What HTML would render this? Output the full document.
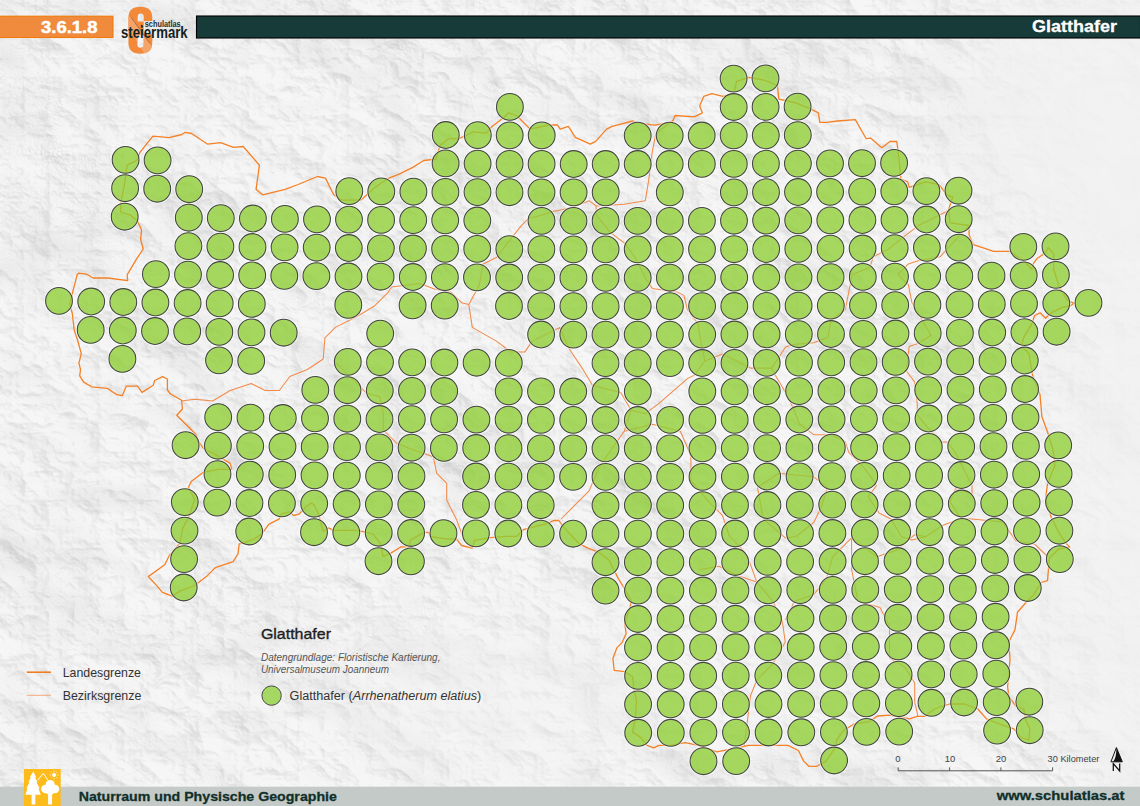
<!DOCTYPE html>
<html><head><meta charset="utf-8"><style>
html,body{margin:0;padding:0;}
body{width:1140px;height:806px;overflow:hidden;position:relative;background:#efefef;}
svg{position:absolute;left:0;top:0;}
text{font-family:"Liberation Sans",sans-serif;}
</style></head><body>
<svg width="1140" height="806" viewBox="0 0 1140 806">
<defs>
<filter id="hs" x="0" y="0" width="100%" height="100%" color-interpolation-filters="sRGB">
<feTurbulence type="turbulence" baseFrequency="0.02 0.026" numOctaves="4" seed="3" result="n"/>
<feColorMatrix in="n" type="matrix" values="0 0 0 0 0  0 0 0 0 0  0 0 0 0 0  -1.2 0 0 0 1" result="a"/>
<feDiffuseLighting in="a" surfaceScale="6" diffuseConstant="1.15" lighting-color="#ffffff" result="l1">
<feDistantLight azimuth="315" elevation="55"/>
</feDiffuseLighting>
<feTurbulence type="fractalNoise" baseFrequency="0.007 0.009" numOctaves="3" seed="11" result="n2"/>
<feColorMatrix in="n2" type="matrix" values="0 0 0 0 0  0 0 0 0 0  0 0 0 0 0  1 0 0 0 0" result="a2"/>
<feDiffuseLighting in="a2" surfaceScale="30" diffuseConstant="1.15" lighting-color="#ffffff" result="l2">
<feDistantLight azimuth="315" elevation="50"/>
</feDiffuseLighting>
<feComposite in="l1" in2="l2" operator="arithmetic" k1="0" k2="0.6" k3="0.4" k4="0" result="l"/>
<feComponentTransfer in="l">
<feFuncR type="linear" slope="0.19" intercept="0.776"/>
<feFuncG type="linear" slope="0.19" intercept="0.776"/>
<feFuncB type="linear" slope="0.19" intercept="0.776"/>
</feComponentTransfer>
</filter>
<filter id="bl" x="-50%" y="-50%" width="200%" height="200%"><feGaussianBlur stdDeviation="45"/></filter>
<mask id="m" maskUnits="userSpaceOnUse" x="0" y="0" width="1140" height="806">
<rect width="1140" height="806" fill="#fff"/>
<g filter="url(#bl)">
<ellipse cx="1110" cy="110" rx="170" ry="150" fill="#000" fill-opacity="0.85"/>
<ellipse cx="1135" cy="480" rx="90" ry="380" fill="#000" fill-opacity="0.85"/>
<ellipse cx="500" cy="700" rx="170" ry="90" fill="#000" fill-opacity="0.5"/>
<ellipse cx="850" cy="630" rx="200" ry="130" fill="#000" fill-opacity="0.35"/>
</g>
</mask>
</defs>
<rect width="1140" height="806" fill="#f2f2f2"/>
<rect width="1140" height="806" filter="url(#hs)" mask="url(#m)"/>
<path d="M181.0 401.0 L195.0 399.3 L212.6 401.0 L230.2 390.5 L251.2 383.5 L265.3 390.5 L279.3 390.5 L289.8 376.5 L307.4 369.5 L323.2 359.0 L324.9 337.9 L335.4 327.4 L356.5 316.8 L374.0 306.3 L388.1 292.3 L391.6 287.0 L405.6 285.3 L419.6 283.5 L433.7 288.8 L451.2 292.3 L461.8 302.8 L468.8 304.6 L472.3 327.4 L496.8 341.4 L510.9 351.9 L524.9 351.9 L532.0 341.4 L546.0 334.4 L560.0 327.4 L568.0 347.0 L582.1 368.1 L592.6 385.6 L620.7 392.6 L631.2 410.2 L645.3 413.7 L659.3 403.2 L687.4 378.6 L694.4 375.1 L704.9 361.0 L722.5 354.0 L750.5 368.1 L771.6 368.1 L785.6 347.0 L792.6 344.6 L813.7 342.8 L827.7 337.5 L831.2 320.0 L845.3 309.5 L848.8 291.9 L852.3 274.4 L869.8 267.4 L873.3 256.8 L887.4 249.8 L904.9 235.8 L918.9 225.3 L940.0 214.7 L952.0 209.0 M468.8 304.6 L479.3 285.3 L482.8 264.2 L496.8 257.2 L507.4 243.2 L521.4 225.6 L528.4 218.6 L542.5 215.1 L554.0 211.2 L571.6 207.7 L589.1 200.7 L596.1 206.0 L624.2 204.2 L645.3 200.7 L648.8 179.6 L652.3 151.6 L655.8 134.0 L673.3 120.0 M596.1 206.0 L596.1 214.7 L610.2 232.3 L624.2 242.8 L634.7 256.8 L645.3 277.9 L652.3 288.4 L676.8 291.9 L683.9 295.4 L687.4 309.5 L697.9 323.5 L701.4 344.6 L704.9 361.0 M969.0 225.5 L940.0 256.8 L918.9 260.4 L908.4 263.9 L897.9 274.4 L908.4 284.9 L911.9 302.5 L920.1 316.4 L931.0 335.5 L917.3 343.7 L909.2 346.4 L906.4 371.0 L914.6 381.9 L917.3 403.8 L917.3 414.7 L928.3 428.3 L941.9 442.0 L947.4 442.0 L955.6 452.9 L961.0 463.8 L972.0 485.7 L972.0 493.9 L955.6 488.4 L950.1 502.1 L961.0 518.5 L971.6 518.9 L1003.1 522.1 L1015.8 541.0 L1034.7 544.2 L1047.0 556.0 M771.6 368.1 L775.1 375.1 L785.6 392.6 L792.6 406.7 L799.6 424.2 L813.7 434.7 L831.2 434.7 L845.3 441.8 L848.8 452.3 L862.8 466.3 L873.3 480.4 L876.4 485.7 L868.2 496.6 L879.1 513.0 L890.9 519.0 L901.4 536.5 L911.9 540.0 L926.0 536.5 L943.1 525.3 L961.0 518.5 M631.2 410.2 L624.2 431.2 L652.3 424.2 L680.4 431.2 L690.9 455.8 L690.9 480.4 L708.4 501.4 L722.5 515.4 L729.5 536.5 L743.5 550.5 L750.5 564.6 L756.8 582.1 L772.6 601.0 L782.1 620.0 L785.3 642.1 L772.6 664.2 L756.8 680.0 L750.5 695.8 L747.4 721.0 L744.2 746.0 M624.2 431.2 L599.6 466.3 L589.1 490.9 L575.1 504.9 L561.1 519.0 M757.5 487.4 L778.6 473.3 L813.7 476.8 L827.7 487.4 L820.7 508.4 L813.7 522.5 L796.1 536.5 L785.3 537.9 L763.2 518.9 L757.5 487.4 M785.3 620.0 L794.7 601.0 L813.7 594.7 L826.3 578.9 L832.6 556.8 L851.6 537.9 L876.8 556.8 L895.8 550.5 L914.7 534.7 L926.0 536.5 M851.6 537.9 L851.6 569.5 L857.9 601.0 L880.0 607.4 L889.5 626.3 L889.5 657.9 L905.2 667.4 L914.7 683.1 L914.7 702.1 L917.9 716.0 M700.0 569.5 L718.9 566.3 L737.9 575.8 L756.8 582.1 M333.3 360.0 L353.3 380.0 L366.7 393.3 L380.0 396.7 L383.3 413.3 L383.3 430.0 L396.7 443.3 L413.3 450.0 L433.3 456.7 L436.7 473.3 L446.7 483.3 L446.7 500.0 L456.7 520.0 L463.3 538.0" fill="none" stroke="#f28a48" stroke-width="1.05" stroke-linejoin="round"/>
<path d="M148.3 576.6 L164.7 564.7 L169.2 555.8 L179.6 543.8 L182.6 528.9 L190.0 514.0 L194.5 499.2 L188.5 487.2 L191.5 481.3 L203.4 472.3 L218.3 469.4 L231.7 469.4 L230.2 463.4 L215.3 454.5 L203.4 448.5 L199.0 442.1 L195.8 434.2 L186.3 424.7 L176.8 415.3 L182.4 409.0 L181.6 400.3 L170.5 394.0 L167.4 390.0 L167.4 379.0 L162.6 376.6 L154.7 380.5 L153.2 385.3 L142.1 392.4 L137.4 386.1 L126.3 386.1 L122.4 395.5 L116.8 394.7 L107.4 388.4 L91.6 386.8 L83.7 382.1 L79.7 375.8 L80.5 369.5 L78.9 363.2 L81.3 353.7 L77.4 339.5 L74.2 330.0 L72.3 313.5 L69.7 303.9 L77.1 274.8 L78.7 273.2 L86.8 274.2 L93.2 278.0 L107.7 278.0 L127.7 280.6 L127.1 274.8 L136.8 258.7 L143.2 249.0 L140.6 239.4 L141.6 229.7 L136.8 220.0 L130.3 215.2 L120.6 212.0 L120.6 203.9 L124.5 184.5 L127.1 165.2 L136.8 160.3 L140.0 152.3 L146.5 144.2 L152.9 136.1 L169.0 137.7 L181.9 134.5 L185.2 132.3 L191.6 133.5 L207.7 144.2 L220.6 142.6 L233.5 147.4 L243.2 146.5 L259.4 165.2 L256.1 189.4 L262.6 194.8 L285.2 189.4 L298.1 184.5 L317.4 176.5 L325.5 178.1 L333.7 194.7 L341.8 200.1 L361.0 200.1 L374.6 187.8 L388.3 178.3 L399.2 174.2 L412.8 167.4 L423.7 160.5 L436.0 159.2 L440.1 145.5 L448.3 138.7 L459.2 138.7 L472.9 131.9 L486.5 133.2 L492.0 126.4 L502.9 118.2 L508.4 112.8 L516.6 115.5 L522.0 121.0 L530.2 129.1 L549.3 125.0 L557.5 125.0 L560.2 129.1 L568.4 126.4 L575.3 137.3 L590.3 144.2 L595.7 141.4 L606.6 129.1 L612.1 126.4 L632.8 121.0 L638.2 123.2 L654.6 125.1 L672.3 122.3 L675.1 115.5 L694.2 116.9 L702.4 112.8 L699.6 106.0 L703.7 96.4 L711.9 93.7 L722.8 96.4 L733.8 93.7 L736.5 81.4 L748.8 77.3 L763.8 80.0 L777.5 85.5 L778.8 99.1 L785.6 100.5 L796.6 103.2 L812.9 110.1 L818.4 112.8 L819.8 122.3 L826.6 122.3 L837.5 121.0 L855.3 119.6 L866.2 138.7 L870.9 138.2 L881.8 147.7 L890.0 141.5 L896.8 141.5 L898.2 151.8 L900.9 179.1 L907.7 181.8 L909.1 187.3 L925.5 181.8 L939.1 184.6 L947.3 195.5 L952.8 196.8 L948.7 209.1 L950.0 222.8 L969.1 225.5 L969.1 235.0 L973.2 244.6 L985.5 248.7 L993.7 251.4 L1010.0 251.4 L1023.7 261.0 L1031.9 269.2 L1033.3 263.7 L1037.4 258.2 L1045.5 252.8 L1048.3 247.3 L1053.7 254.2 L1053.7 269.2 L1059.2 286.9 L1067.4 300.5 L1074.2 303.3 L1070.1 306.0 L1061.9 307.4 L1051.0 312.8 L1045.5 318.3 L1040.1 312.8 L1034.6 315.5 L1031.9 323.7 L1023.7 337.4 L1021.4 346.0 L1028.9 353.5 L1032.6 375.8 L1040.0 394.5 L1041.9 416.8 L1047.5 431.7 L1053.1 450.3 L1055.0 465.2 L1047.5 483.8 L1045.6 498.7 L1051.2 517.3 L1058.7 532.2 L1066.1 543.4 L1069.8 547.1 L1058.7 549.0 L1049.4 558.3 L1047.5 580.6 L1041.0 582.5 L1033.6 594.9 L1026.2 602.3 L1017.5 612.2 L1015.0 629.6 L1008.8 642.0 L1010.0 659.4 L1007.6 686.6 L1008.8 696.6 L1016.3 706.5 L1023.7 709.0 L1026.2 721.4 L1029.9 728.8 L1028.7 740.0 L1021.2 737.5 L1013.8 728.8 L998.9 723.8 L986.5 718.9 L977.8 709.0 L964.2 704.0 L949.3 704.0 L934.4 709.0 L924.5 716.4 L917.0 716.4 L909.6 718.9 L889.8 715.2 L877.4 716.0 L869.5 721.6 L853.7 724.2 L843.2 730.8 L836.6 740.0 L835.3 747.9 L826.0 761.1 L816.8 766.3 L808.9 766.3 L803.7 761.1 L798.4 750.5 L787.9 745.3 L774.7 745.3 L764.2 745.3 L748.4 745.3 L737.9 747.9 L716.8 751.8 L698.4 745.3 L685.3 742.6 L669.5 745.3 L658.9 745.3 L653.7 747.9 L647.1 745.3 L640.5 737.4 L632.6 732.1 L635.3 718.9 L636.6 700.5 L634.0 690.0 L632.6 676.8 L624.7 671.6 L614.2 670.3 L612.9 658.4 L616.8 647.9 L622.1 642.6 L626.1 633.7 L624.7 623.2 L630.0 607.4 L631.3 600.8 L624.7 589.0 L618.2 578.4 L614.2 570.5 L608.9 560.0 L598.4 552.1 L587.9 548.2 L580.0 544.2 L569.5 533.7 L561.6 524.5 L558.9 520.5 L553.7 520.5 L548.4 523.2 L537.9 525.8 L523.4 529.7 L516.8 536.3 L506.3 536.3 L490.5 537.6 L474.7 540.3 L472.1 548.2 L461.6 545.5 L456.3 538.9 L445.8 538.9 L430.0 536.3 L428.7 532.4 L424.7 532.4 L416.8 536.3 L410.3 540.3 L408.9 546.8 L401.1 546.8 L390.5 553.4 L383.1 556.4 L380.7 544.0 L373.2 534.1 L363.3 531.6 L355.9 530.4 L333.5 530.4 L328.6 527.9 L323.6 531.6 L321.1 524.2 L318.7 514.2 L313.7 504.3 L311.2 503.1 L306.2 506.8 L298.8 514.2 L293.8 515.5 L288.9 511.8 L281.4 514.2 L279.0 519.2 L269.0 524.2 L261.6 534.1 L254.2 539.0 L245.1 542.3 L239.2 543.8 L238.0 553.9 L233.2 561.7 L215.3 567.7 L212.3 570.6 L206.4 576.6 L194.5 585.5 L179.8 591.1 L172.3 596.1 L162.4 592.4 L155.0 583.7 Z" fill="none" stroke="#f58025" stroke-width="1.3" stroke-linejoin="round"/>
<g fill="none" stroke="#fff" stroke-opacity="0.55" stroke-width="3">
<circle cx="733.6" cy="78.6" r="13.4"/>
<circle cx="765.5" cy="78.4" r="13.4"/>
<circle cx="509.9" cy="106.9" r="13.4"/>
<circle cx="733.7" cy="107.0" r="13.4"/>
<circle cx="765.6" cy="106.9" r="13.4"/>
<circle cx="797.6" cy="106.7" r="13.4"/>
<circle cx="445.8" cy="135.0" r="13.4"/>
<circle cx="477.8" cy="135.2" r="13.4"/>
<circle cx="509.7" cy="135.3" r="13.4"/>
<circle cx="541.7" cy="135.4" r="13.4"/>
<circle cx="637.7" cy="135.6" r="13.4"/>
<circle cx="669.7" cy="135.6" r="13.4"/>
<circle cx="701.7" cy="135.5" r="13.4"/>
<circle cx="733.7" cy="135.4" r="13.4"/>
<circle cx="765.8" cy="135.3" r="13.4"/>
<circle cx="797.8" cy="135.1" r="13.4"/>
<circle cx="125.6" cy="159.8" r="13.4"/>
<circle cx="157.6" cy="160.3" r="13.4"/>
<circle cx="445.6" cy="163.4" r="13.4"/>
<circle cx="477.6" cy="163.6" r="13.4"/>
<circle cx="509.6" cy="163.8" r="13.4"/>
<circle cx="541.6" cy="163.9" r="13.4"/>
<circle cx="573.7" cy="164.0" r="13.4"/>
<circle cx="605.7" cy="164.0" r="13.4"/>
<circle cx="637.7" cy="164.0" r="13.4"/>
<circle cx="669.7" cy="164.0" r="13.4"/>
<circle cx="701.8" cy="163.9" r="13.4"/>
<circle cx="733.8" cy="163.9" r="13.4"/>
<circle cx="765.9" cy="163.7" r="13.4"/>
<circle cx="797.9" cy="163.6" r="13.4"/>
<circle cx="830.0" cy="163.4" r="13.4"/>
<circle cx="862.0" cy="163.2" r="13.4"/>
<circle cx="894.1" cy="162.9" r="13.4"/>
<circle cx="125.1" cy="188.2" r="13.4"/>
<circle cx="157.2" cy="188.7" r="13.4"/>
<circle cx="189.2" cy="189.2" r="13.4"/>
<circle cx="349.3" cy="191.1" r="13.4"/>
<circle cx="381.3" cy="191.4" r="13.4"/>
<circle cx="413.4" cy="191.7" r="13.4"/>
<circle cx="445.4" cy="191.9" r="13.4"/>
<circle cx="477.5" cy="192.1" r="13.4"/>
<circle cx="509.5" cy="192.2" r="13.4"/>
<circle cx="541.5" cy="192.3" r="13.4"/>
<circle cx="573.6" cy="192.4" r="13.4"/>
<circle cx="605.7" cy="192.4" r="13.4"/>
<circle cx="669.8" cy="192.4" r="13.4"/>
<circle cx="733.9" cy="192.3" r="13.4"/>
<circle cx="766.0" cy="192.2" r="13.4"/>
<circle cx="798.0" cy="192.0" r="13.4"/>
<circle cx="830.1" cy="191.8" r="13.4"/>
<circle cx="862.2" cy="191.6" r="13.4"/>
<circle cx="894.3" cy="191.3" r="13.4"/>
<circle cx="926.4" cy="191.1" r="13.4"/>
<circle cx="958.5" cy="190.7" r="13.4"/>
<circle cx="124.7" cy="216.7" r="13.4"/>
<circle cx="188.8" cy="217.7" r="13.4"/>
<circle cx="220.8" cy="218.1" r="13.4"/>
<circle cx="252.9" cy="218.5" r="13.4"/>
<circle cx="284.9" cy="218.9" r="13.4"/>
<circle cx="317.0" cy="219.3" r="13.4"/>
<circle cx="349.0" cy="219.6" r="13.4"/>
<circle cx="381.1" cy="219.9" r="13.4"/>
<circle cx="413.2" cy="220.1" r="13.4"/>
<circle cx="445.2" cy="220.3" r="13.4"/>
<circle cx="477.3" cy="220.5" r="13.4"/>
<circle cx="541.5" cy="220.8" r="13.4"/>
<circle cx="573.5" cy="220.8" r="13.4"/>
<circle cx="605.6" cy="220.9" r="13.4"/>
<circle cx="637.7" cy="220.9" r="13.4"/>
<circle cx="669.8" cy="220.9" r="13.4"/>
<circle cx="701.9" cy="220.8" r="13.4"/>
<circle cx="734.0" cy="220.7" r="13.4"/>
<circle cx="766.1" cy="220.6" r="13.4"/>
<circle cx="798.2" cy="220.4" r="13.4"/>
<circle cx="830.3" cy="220.3" r="13.4"/>
<circle cx="862.4" cy="220.0" r="13.4"/>
<circle cx="894.5" cy="219.8" r="13.4"/>
<circle cx="926.6" cy="219.5" r="13.4"/>
<circle cx="958.7" cy="219.2" r="13.4"/>
<circle cx="188.4" cy="246.1" r="13.4"/>
<circle cx="220.4" cy="246.6" r="13.4"/>
<circle cx="252.5" cy="247.0" r="13.4"/>
<circle cx="284.6" cy="247.4" r="13.4"/>
<circle cx="316.7" cy="247.7" r="13.4"/>
<circle cx="348.8" cy="248.0" r="13.4"/>
<circle cx="380.9" cy="248.3" r="13.4"/>
<circle cx="413.0" cy="248.5" r="13.4"/>
<circle cx="445.1" cy="248.8" r="13.4"/>
<circle cx="477.2" cy="248.9" r="13.4"/>
<circle cx="509.3" cy="249.1" r="13.4"/>
<circle cx="541.4" cy="249.2" r="13.4"/>
<circle cx="573.5" cy="249.3" r="13.4"/>
<circle cx="605.6" cy="249.3" r="13.4"/>
<circle cx="637.7" cy="249.3" r="13.4"/>
<circle cx="669.8" cy="249.3" r="13.4"/>
<circle cx="702.0" cy="249.3" r="13.4"/>
<circle cx="734.1" cy="249.2" r="13.4"/>
<circle cx="766.2" cy="249.0" r="13.4"/>
<circle cx="798.3" cy="248.9" r="13.4"/>
<circle cx="830.5" cy="248.7" r="13.4"/>
<circle cx="862.6" cy="248.5" r="13.4"/>
<circle cx="894.7" cy="248.2" r="13.4"/>
<circle cx="926.9" cy="247.9" r="13.4"/>
<circle cx="959.0" cy="247.6" r="13.4"/>
<circle cx="1023.3" cy="246.8" r="13.4"/>
<circle cx="1055.5" cy="246.4" r="13.4"/>
<circle cx="155.9" cy="274.1" r="13.4"/>
<circle cx="188.0" cy="274.6" r="13.4"/>
<circle cx="220.1" cy="275.0" r="13.4"/>
<circle cx="252.2" cy="275.4" r="13.4"/>
<circle cx="284.3" cy="275.8" r="13.4"/>
<circle cx="316.4" cy="276.1" r="13.4"/>
<circle cx="348.5" cy="276.5" r="13.4"/>
<circle cx="380.6" cy="276.7" r="13.4"/>
<circle cx="412.8" cy="277.0" r="13.4"/>
<circle cx="444.9" cy="277.2" r="13.4"/>
<circle cx="477.0" cy="277.4" r="13.4"/>
<circle cx="509.2" cy="277.5" r="13.4"/>
<circle cx="541.3" cy="277.6" r="13.4"/>
<circle cx="573.4" cy="277.7" r="13.4"/>
<circle cx="605.6" cy="277.8" r="13.4"/>
<circle cx="637.7" cy="277.8" r="13.4"/>
<circle cx="669.9" cy="277.7" r="13.4"/>
<circle cx="702.0" cy="277.7" r="13.4"/>
<circle cx="734.2" cy="277.6" r="13.4"/>
<circle cx="766.3" cy="277.5" r="13.4"/>
<circle cx="798.5" cy="277.3" r="13.4"/>
<circle cx="830.6" cy="277.1" r="13.4"/>
<circle cx="862.8" cy="276.9" r="13.4"/>
<circle cx="895.0" cy="276.6" r="13.4"/>
<circle cx="927.2" cy="276.3" r="13.4"/>
<circle cx="959.3" cy="276.0" r="13.4"/>
<circle cx="991.5" cy="275.7" r="13.4"/>
<circle cx="1023.7" cy="275.3" r="13.4"/>
<circle cx="1055.9" cy="274.8" r="13.4"/>
<circle cx="59.0" cy="300.9" r="13.4"/>
<circle cx="91.2" cy="301.5" r="13.4"/>
<circle cx="123.3" cy="302.0" r="13.4"/>
<circle cx="155.4" cy="302.5" r="13.4"/>
<circle cx="187.6" cy="303.0" r="13.4"/>
<circle cx="219.7" cy="303.4" r="13.4"/>
<circle cx="251.8" cy="303.9" r="13.4"/>
<circle cx="348.3" cy="304.9" r="13.4"/>
<circle cx="412.6" cy="305.4" r="13.4"/>
<circle cx="444.7" cy="305.6" r="13.4"/>
<circle cx="509.0" cy="306.0" r="13.4"/>
<circle cx="541.2" cy="306.1" r="13.4"/>
<circle cx="573.4" cy="306.2" r="13.4"/>
<circle cx="605.6" cy="306.2" r="13.4"/>
<circle cx="637.7" cy="306.2" r="13.4"/>
<circle cx="669.9" cy="306.2" r="13.4"/>
<circle cx="702.1" cy="306.1" r="13.4"/>
<circle cx="734.3" cy="306.0" r="13.4"/>
<circle cx="766.5" cy="305.9" r="13.4"/>
<circle cx="798.6" cy="305.7" r="13.4"/>
<circle cx="830.8" cy="305.6" r="13.4"/>
<circle cx="863.0" cy="305.3" r="13.4"/>
<circle cx="895.2" cy="305.1" r="13.4"/>
<circle cx="927.4" cy="304.8" r="13.4"/>
<circle cx="959.6" cy="304.4" r="13.4"/>
<circle cx="991.8" cy="304.1" r="13.4"/>
<circle cx="1024.0" cy="303.7" r="13.4"/>
<circle cx="1056.3" cy="303.3" r="13.4"/>
<circle cx="1088.5" cy="302.8" r="13.4"/>
<circle cx="90.7" cy="329.9" r="13.4"/>
<circle cx="122.8" cy="330.5" r="13.4"/>
<circle cx="155.0" cy="331.0" r="13.4"/>
<circle cx="187.2" cy="331.4" r="13.4"/>
<circle cx="219.3" cy="331.9" r="13.4"/>
<circle cx="251.5" cy="332.3" r="13.4"/>
<circle cx="283.7" cy="332.7" r="13.4"/>
<circle cx="380.2" cy="333.6" r="13.4"/>
<circle cx="541.1" cy="334.5" r="13.4"/>
<circle cx="573.3" cy="334.6" r="13.4"/>
<circle cx="605.5" cy="334.6" r="13.4"/>
<circle cx="637.7" cy="334.6" r="13.4"/>
<circle cx="669.9" cy="334.6" r="13.4"/>
<circle cx="702.2" cy="334.6" r="13.4"/>
<circle cx="734.4" cy="334.5" r="13.4"/>
<circle cx="766.6" cy="334.3" r="13.4"/>
<circle cx="798.8" cy="334.2" r="13.4"/>
<circle cx="831.0" cy="334.0" r="13.4"/>
<circle cx="863.2" cy="333.8" r="13.4"/>
<circle cx="895.5" cy="333.5" r="13.4"/>
<circle cx="927.7" cy="333.2" r="13.4"/>
<circle cx="959.9" cy="332.9" r="13.4"/>
<circle cx="992.2" cy="332.5" r="13.4"/>
<circle cx="1024.4" cy="332.1" r="13.4"/>
<circle cx="1056.6" cy="331.7" r="13.4"/>
<circle cx="122.4" cy="358.9" r="13.4"/>
<circle cx="219.0" cy="360.3" r="13.4"/>
<circle cx="251.2" cy="360.8" r="13.4"/>
<circle cx="347.8" cy="361.8" r="13.4"/>
<circle cx="380.0" cy="362.1" r="13.4"/>
<circle cx="412.2" cy="362.3" r="13.4"/>
<circle cx="444.4" cy="362.5" r="13.4"/>
<circle cx="476.6" cy="362.7" r="13.4"/>
<circle cx="508.8" cy="362.8" r="13.4"/>
<circle cx="605.5" cy="363.1" r="13.4"/>
<circle cx="637.7" cy="363.1" r="13.4"/>
<circle cx="670.0" cy="363.1" r="13.4"/>
<circle cx="702.2" cy="363.0" r="13.4"/>
<circle cx="734.5" cy="362.9" r="13.4"/>
<circle cx="766.7" cy="362.8" r="13.4"/>
<circle cx="799.0" cy="362.6" r="13.4"/>
<circle cx="831.2" cy="362.4" r="13.4"/>
<circle cx="863.5" cy="362.2" r="13.4"/>
<circle cx="895.7" cy="361.9" r="13.4"/>
<circle cx="928.0" cy="361.6" r="13.4"/>
<circle cx="960.2" cy="361.3" r="13.4"/>
<circle cx="992.5" cy="360.9" r="13.4"/>
<circle cx="1024.8" cy="360.5" r="13.4"/>
<circle cx="315.3" cy="389.9" r="13.4"/>
<circle cx="347.5" cy="390.2" r="13.4"/>
<circle cx="379.8" cy="390.5" r="13.4"/>
<circle cx="412.0" cy="390.8" r="13.4"/>
<circle cx="444.2" cy="391.0" r="13.4"/>
<circle cx="508.7" cy="391.3" r="13.4"/>
<circle cx="541.0" cy="391.4" r="13.4"/>
<circle cx="573.2" cy="391.5" r="13.4"/>
<circle cx="605.5" cy="391.5" r="13.4"/>
<circle cx="637.8" cy="391.5" r="13.4"/>
<circle cx="702.3" cy="391.4" r="13.4"/>
<circle cx="734.6" cy="391.3" r="13.4"/>
<circle cx="766.8" cy="391.2" r="13.4"/>
<circle cx="799.1" cy="391.1" r="13.4"/>
<circle cx="831.4" cy="390.9" r="13.4"/>
<circle cx="863.7" cy="390.6" r="13.4"/>
<circle cx="896.0" cy="390.4" r="13.4"/>
<circle cx="928.2" cy="390.1" r="13.4"/>
<circle cx="960.5" cy="389.7" r="13.4"/>
<circle cx="992.8" cy="389.4" r="13.4"/>
<circle cx="1025.1" cy="389.0" r="13.4"/>
<circle cx="218.2" cy="417.2" r="13.4"/>
<circle cx="250.5" cy="417.7" r="13.4"/>
<circle cx="282.8" cy="418.0" r="13.4"/>
<circle cx="315.0" cy="418.4" r="13.4"/>
<circle cx="347.3" cy="418.7" r="13.4"/>
<circle cx="379.5" cy="419.0" r="13.4"/>
<circle cx="411.8" cy="419.2" r="13.4"/>
<circle cx="444.1" cy="419.4" r="13.4"/>
<circle cx="476.4" cy="419.6" r="13.4"/>
<circle cx="508.6" cy="419.7" r="13.4"/>
<circle cx="540.9" cy="419.8" r="13.4"/>
<circle cx="573.2" cy="419.9" r="13.4"/>
<circle cx="605.5" cy="420.0" r="13.4"/>
<circle cx="637.8" cy="420.0" r="13.4"/>
<circle cx="670.1" cy="419.9" r="13.4"/>
<circle cx="702.4" cy="419.9" r="13.4"/>
<circle cx="734.7" cy="419.8" r="13.4"/>
<circle cx="767.0" cy="419.7" r="13.4"/>
<circle cx="799.3" cy="419.5" r="13.4"/>
<circle cx="831.6" cy="419.3" r="13.4"/>
<circle cx="863.9" cy="419.1" r="13.4"/>
<circle cx="896.2" cy="418.8" r="13.4"/>
<circle cx="928.5" cy="418.5" r="13.4"/>
<circle cx="960.8" cy="418.2" r="13.4"/>
<circle cx="993.2" cy="417.8" r="13.4"/>
<circle cx="1025.5" cy="417.4" r="13.4"/>
<circle cx="185.6" cy="445.2" r="13.4"/>
<circle cx="217.9" cy="445.7" r="13.4"/>
<circle cx="250.2" cy="446.1" r="13.4"/>
<circle cx="282.5" cy="446.5" r="13.4"/>
<circle cx="314.7" cy="446.8" r="13.4"/>
<circle cx="347.0" cy="447.1" r="13.4"/>
<circle cx="379.3" cy="447.4" r="13.4"/>
<circle cx="411.6" cy="447.7" r="13.4"/>
<circle cx="443.9" cy="447.9" r="13.4"/>
<circle cx="476.2" cy="448.0" r="13.4"/>
<circle cx="508.5" cy="448.2" r="13.4"/>
<circle cx="540.9" cy="448.3" r="13.4"/>
<circle cx="573.2" cy="448.4" r="13.4"/>
<circle cx="605.5" cy="448.4" r="13.4"/>
<circle cx="637.8" cy="448.4" r="13.4"/>
<circle cx="670.1" cy="448.4" r="13.4"/>
<circle cx="702.5" cy="448.3" r="13.4"/>
<circle cx="734.8" cy="448.2" r="13.4"/>
<circle cx="767.1" cy="448.1" r="13.4"/>
<circle cx="799.4" cy="447.9" r="13.4"/>
<circle cx="831.8" cy="447.7" r="13.4"/>
<circle cx="864.1" cy="447.5" r="13.4"/>
<circle cx="896.5" cy="447.2" r="13.4"/>
<circle cx="928.8" cy="446.9" r="13.4"/>
<circle cx="961.2" cy="446.6" r="13.4"/>
<circle cx="993.5" cy="446.2" r="13.4"/>
<circle cx="1025.9" cy="445.8" r="13.4"/>
<circle cx="1058.2" cy="445.4" r="13.4"/>
<circle cx="217.5" cy="474.1" r="13.4"/>
<circle cx="249.8" cy="474.6" r="13.4"/>
<circle cx="282.2" cy="474.9" r="13.4"/>
<circle cx="314.5" cy="475.3" r="13.4"/>
<circle cx="346.8" cy="475.6" r="13.4"/>
<circle cx="379.1" cy="475.9" r="13.4"/>
<circle cx="411.5" cy="476.1" r="13.4"/>
<circle cx="476.1" cy="476.5" r="13.4"/>
<circle cx="508.5" cy="476.6" r="13.4"/>
<circle cx="540.8" cy="476.7" r="13.4"/>
<circle cx="573.1" cy="476.8" r="13.4"/>
<circle cx="605.5" cy="476.8" r="13.4"/>
<circle cx="637.8" cy="476.8" r="13.4"/>
<circle cx="670.2" cy="476.8" r="13.4"/>
<circle cx="702.5" cy="476.8" r="13.4"/>
<circle cx="734.9" cy="476.7" r="13.4"/>
<circle cx="767.2" cy="476.5" r="13.4"/>
<circle cx="799.6" cy="476.4" r="13.4"/>
<circle cx="832.0" cy="476.2" r="13.4"/>
<circle cx="864.3" cy="475.9" r="13.4"/>
<circle cx="896.7" cy="475.7" r="13.4"/>
<circle cx="929.1" cy="475.4" r="13.4"/>
<circle cx="961.5" cy="475.0" r="13.4"/>
<circle cx="993.9" cy="474.7" r="13.4"/>
<circle cx="1026.2" cy="474.3" r="13.4"/>
<circle cx="1058.6" cy="473.8" r="13.4"/>
<circle cx="184.8" cy="502.1" r="13.4"/>
<circle cx="217.2" cy="502.6" r="13.4"/>
<circle cx="249.5" cy="503.0" r="13.4"/>
<circle cx="281.9" cy="503.4" r="13.4"/>
<circle cx="314.2" cy="503.7" r="13.4"/>
<circle cx="346.6" cy="504.0" r="13.4"/>
<circle cx="378.9" cy="504.3" r="13.4"/>
<circle cx="411.3" cy="504.5" r="13.4"/>
<circle cx="476.0" cy="504.9" r="13.4"/>
<circle cx="508.4" cy="505.1" r="13.4"/>
<circle cx="540.7" cy="505.2" r="13.4"/>
<circle cx="605.5" cy="505.3" r="13.4"/>
<circle cx="637.9" cy="505.3" r="13.4"/>
<circle cx="670.2" cy="505.3" r="13.4"/>
<circle cx="702.6" cy="505.2" r="13.4"/>
<circle cx="735.0" cy="505.1" r="13.4"/>
<circle cx="767.4" cy="505.0" r="13.4"/>
<circle cx="799.8" cy="504.8" r="13.4"/>
<circle cx="832.2" cy="504.6" r="13.4"/>
<circle cx="864.6" cy="504.4" r="13.4"/>
<circle cx="897.0" cy="504.1" r="13.4"/>
<circle cx="929.4" cy="503.8" r="13.4"/>
<circle cx="961.8" cy="503.5" r="13.4"/>
<circle cx="994.2" cy="503.1" r="13.4"/>
<circle cx="1026.6" cy="502.7" r="13.4"/>
<circle cx="1059.0" cy="502.3" r="13.4"/>
<circle cx="184.5" cy="530.6" r="13.4"/>
<circle cx="249.2" cy="531.5" r="13.4"/>
<circle cx="314.0" cy="532.2" r="13.4"/>
<circle cx="346.3" cy="532.5" r="13.4"/>
<circle cx="378.7" cy="532.7" r="13.4"/>
<circle cx="411.1" cy="533.0" r="13.4"/>
<circle cx="443.5" cy="533.2" r="13.4"/>
<circle cx="475.9" cy="533.4" r="13.4"/>
<circle cx="508.3" cy="533.5" r="13.4"/>
<circle cx="540.7" cy="533.6" r="13.4"/>
<circle cx="573.1" cy="533.7" r="13.4"/>
<circle cx="605.5" cy="533.7" r="13.4"/>
<circle cx="637.9" cy="533.7" r="13.4"/>
<circle cx="670.3" cy="533.7" r="13.4"/>
<circle cx="702.7" cy="533.6" r="13.4"/>
<circle cx="735.1" cy="533.5" r="13.4"/>
<circle cx="767.5" cy="533.4" r="13.4"/>
<circle cx="800.0" cy="533.2" r="13.4"/>
<circle cx="832.4" cy="533.0" r="13.4"/>
<circle cx="864.8" cy="532.8" r="13.4"/>
<circle cx="897.2" cy="532.5" r="13.4"/>
<circle cx="929.7" cy="532.2" r="13.4"/>
<circle cx="962.1" cy="531.9" r="13.4"/>
<circle cx="994.5" cy="531.5" r="13.4"/>
<circle cx="1027.0" cy="531.1" r="13.4"/>
<circle cx="1059.4" cy="530.7" r="13.4"/>
<circle cx="184.1" cy="559.1" r="13.4"/>
<circle cx="378.5" cy="561.2" r="13.4"/>
<circle cx="410.9" cy="561.4" r="13.4"/>
<circle cx="605.5" cy="562.2" r="13.4"/>
<circle cx="637.9" cy="562.2" r="13.4"/>
<circle cx="670.4" cy="562.1" r="13.4"/>
<circle cx="702.8" cy="562.1" r="13.4"/>
<circle cx="735.2" cy="562.0" r="13.4"/>
<circle cx="767.7" cy="561.8" r="13.4"/>
<circle cx="800.1" cy="561.7" r="13.4"/>
<circle cx="832.6" cy="561.5" r="13.4"/>
<circle cx="865.0" cy="561.2" r="13.4"/>
<circle cx="897.5" cy="561.0" r="13.4"/>
<circle cx="930.0" cy="560.7" r="13.4"/>
<circle cx="962.4" cy="560.3" r="13.4"/>
<circle cx="994.9" cy="560.0" r="13.4"/>
<circle cx="1027.4" cy="559.6" r="13.4"/>
<circle cx="1059.8" cy="559.1" r="13.4"/>
<circle cx="183.7" cy="587.5" r="13.4"/>
<circle cx="605.5" cy="590.6" r="13.4"/>
<circle cx="638.0" cy="590.6" r="13.4"/>
<circle cx="670.4" cy="590.6" r="13.4"/>
<circle cx="702.9" cy="590.5" r="13.4"/>
<circle cx="735.4" cy="590.4" r="13.4"/>
<circle cx="767.8" cy="590.3" r="13.4"/>
<circle cx="800.3" cy="590.1" r="13.4"/>
<circle cx="832.8" cy="589.9" r="13.4"/>
<circle cx="865.3" cy="589.7" r="13.4"/>
<circle cx="897.8" cy="589.4" r="13.4"/>
<circle cx="930.3" cy="589.1" r="13.4"/>
<circle cx="962.8" cy="588.8" r="13.4"/>
<circle cx="995.3" cy="588.4" r="13.4"/>
<circle cx="1027.8" cy="588.0" r="13.4"/>
<circle cx="638.0" cy="619.0" r="13.4"/>
<circle cx="670.5" cy="619.0" r="13.4"/>
<circle cx="703.0" cy="618.9" r="13.4"/>
<circle cx="735.5" cy="618.8" r="13.4"/>
<circle cx="768.0" cy="618.7" r="13.4"/>
<circle cx="800.5" cy="618.5" r="13.4"/>
<circle cx="833.0" cy="618.3" r="13.4"/>
<circle cx="865.5" cy="618.1" r="13.4"/>
<circle cx="898.0" cy="617.8" r="13.4"/>
<circle cx="930.6" cy="617.5" r="13.4"/>
<circle cx="963.1" cy="617.2" r="13.4"/>
<circle cx="995.6" cy="616.8" r="13.4"/>
<circle cx="638.0" cy="647.5" r="13.4"/>
<circle cx="670.6" cy="647.5" r="13.4"/>
<circle cx="703.1" cy="647.4" r="13.4"/>
<circle cx="735.6" cy="647.3" r="13.4"/>
<circle cx="768.1" cy="647.2" r="13.4"/>
<circle cx="800.7" cy="647.0" r="13.4"/>
<circle cx="833.2" cy="646.8" r="13.4"/>
<circle cx="865.8" cy="646.5" r="13.4"/>
<circle cx="898.3" cy="646.3" r="13.4"/>
<circle cx="930.9" cy="646.0" r="13.4"/>
<circle cx="963.4" cy="645.6" r="13.4"/>
<circle cx="996.0" cy="645.3" r="13.4"/>
<circle cx="638.1" cy="675.9" r="13.4"/>
<circle cx="670.6" cy="675.9" r="13.4"/>
<circle cx="703.2" cy="675.8" r="13.4"/>
<circle cx="735.7" cy="675.7" r="13.4"/>
<circle cx="768.3" cy="675.6" r="13.4"/>
<circle cx="800.9" cy="675.4" r="13.4"/>
<circle cx="833.4" cy="675.2" r="13.4"/>
<circle cx="866.0" cy="675.0" r="13.4"/>
<circle cx="898.6" cy="674.7" r="13.4"/>
<circle cx="931.2" cy="674.4" r="13.4"/>
<circle cx="963.7" cy="674.1" r="13.4"/>
<circle cx="996.3" cy="673.7" r="13.4"/>
<circle cx="638.1" cy="704.4" r="13.4"/>
<circle cx="670.7" cy="704.3" r="13.4"/>
<circle cx="703.3" cy="704.3" r="13.4"/>
<circle cx="735.9" cy="704.2" r="13.4"/>
<circle cx="768.5" cy="704.0" r="13.4"/>
<circle cx="801.1" cy="703.9" r="13.4"/>
<circle cx="833.7" cy="703.7" r="13.4"/>
<circle cx="866.3" cy="703.4" r="13.4"/>
<circle cx="898.9" cy="703.2" r="13.4"/>
<circle cx="931.5" cy="702.8" r="13.4"/>
<circle cx="964.1" cy="702.5" r="13.4"/>
<circle cx="996.7" cy="702.1" r="13.4"/>
<circle cx="1029.3" cy="701.7" r="13.4"/>
<circle cx="638.2" cy="732.8" r="13.4"/>
<circle cx="670.8" cy="732.8" r="13.4"/>
<circle cx="703.4" cy="732.7" r="13.4"/>
<circle cx="736.0" cy="732.6" r="13.4"/>
<circle cx="768.6" cy="732.5" r="13.4"/>
<circle cx="801.3" cy="732.3" r="13.4"/>
<circle cx="833.9" cy="732.1" r="13.4"/>
<circle cx="866.5" cy="731.9" r="13.4"/>
<circle cx="899.2" cy="731.6" r="13.4"/>
<circle cx="997.1" cy="730.6" r="13.4"/>
<circle cx="1029.7" cy="730.2" r="13.4"/>
<circle cx="703.5" cy="761.2" r="13.4"/>
<circle cx="736.2" cy="761.1" r="13.4"/>
<circle cx="834.1" cy="760.5" r="13.4"/>
</g>
<g fill="#8fce34" fill-opacity="0.78" stroke="#444" stroke-width="1.05" stroke-opacity="1">
<circle cx="733.6" cy="78.6" r="13.4"/>
<circle cx="765.5" cy="78.4" r="13.4"/>
<circle cx="509.9" cy="106.9" r="13.4"/>
<circle cx="733.7" cy="107.0" r="13.4"/>
<circle cx="765.6" cy="106.9" r="13.4"/>
<circle cx="797.6" cy="106.7" r="13.4"/>
<circle cx="445.8" cy="135.0" r="13.4"/>
<circle cx="477.8" cy="135.2" r="13.4"/>
<circle cx="509.7" cy="135.3" r="13.4"/>
<circle cx="541.7" cy="135.4" r="13.4"/>
<circle cx="637.7" cy="135.6" r="13.4"/>
<circle cx="669.7" cy="135.6" r="13.4"/>
<circle cx="701.7" cy="135.5" r="13.4"/>
<circle cx="733.7" cy="135.4" r="13.4"/>
<circle cx="765.8" cy="135.3" r="13.4"/>
<circle cx="797.8" cy="135.1" r="13.4"/>
<circle cx="125.6" cy="159.8" r="13.4"/>
<circle cx="157.6" cy="160.3" r="13.4"/>
<circle cx="445.6" cy="163.4" r="13.4"/>
<circle cx="477.6" cy="163.6" r="13.4"/>
<circle cx="509.6" cy="163.8" r="13.4"/>
<circle cx="541.6" cy="163.9" r="13.4"/>
<circle cx="573.7" cy="164.0" r="13.4"/>
<circle cx="605.7" cy="164.0" r="13.4"/>
<circle cx="637.7" cy="164.0" r="13.4"/>
<circle cx="669.7" cy="164.0" r="13.4"/>
<circle cx="701.8" cy="163.9" r="13.4"/>
<circle cx="733.8" cy="163.9" r="13.4"/>
<circle cx="765.9" cy="163.7" r="13.4"/>
<circle cx="797.9" cy="163.6" r="13.4"/>
<circle cx="830.0" cy="163.4" r="13.4"/>
<circle cx="862.0" cy="163.2" r="13.4"/>
<circle cx="894.1" cy="162.9" r="13.4"/>
<circle cx="125.1" cy="188.2" r="13.4"/>
<circle cx="157.2" cy="188.7" r="13.4"/>
<circle cx="189.2" cy="189.2" r="13.4"/>
<circle cx="349.3" cy="191.1" r="13.4"/>
<circle cx="381.3" cy="191.4" r="13.4"/>
<circle cx="413.4" cy="191.7" r="13.4"/>
<circle cx="445.4" cy="191.9" r="13.4"/>
<circle cx="477.5" cy="192.1" r="13.4"/>
<circle cx="509.5" cy="192.2" r="13.4"/>
<circle cx="541.5" cy="192.3" r="13.4"/>
<circle cx="573.6" cy="192.4" r="13.4"/>
<circle cx="605.7" cy="192.4" r="13.4"/>
<circle cx="669.8" cy="192.4" r="13.4"/>
<circle cx="733.9" cy="192.3" r="13.4"/>
<circle cx="766.0" cy="192.2" r="13.4"/>
<circle cx="798.0" cy="192.0" r="13.4"/>
<circle cx="830.1" cy="191.8" r="13.4"/>
<circle cx="862.2" cy="191.6" r="13.4"/>
<circle cx="894.3" cy="191.3" r="13.4"/>
<circle cx="926.4" cy="191.1" r="13.4"/>
<circle cx="958.5" cy="190.7" r="13.4"/>
<circle cx="124.7" cy="216.7" r="13.4"/>
<circle cx="188.8" cy="217.7" r="13.4"/>
<circle cx="220.8" cy="218.1" r="13.4"/>
<circle cx="252.9" cy="218.5" r="13.4"/>
<circle cx="284.9" cy="218.9" r="13.4"/>
<circle cx="317.0" cy="219.3" r="13.4"/>
<circle cx="349.0" cy="219.6" r="13.4"/>
<circle cx="381.1" cy="219.9" r="13.4"/>
<circle cx="413.2" cy="220.1" r="13.4"/>
<circle cx="445.2" cy="220.3" r="13.4"/>
<circle cx="477.3" cy="220.5" r="13.4"/>
<circle cx="541.5" cy="220.8" r="13.4"/>
<circle cx="573.5" cy="220.8" r="13.4"/>
<circle cx="605.6" cy="220.9" r="13.4"/>
<circle cx="637.7" cy="220.9" r="13.4"/>
<circle cx="669.8" cy="220.9" r="13.4"/>
<circle cx="701.9" cy="220.8" r="13.4"/>
<circle cx="734.0" cy="220.7" r="13.4"/>
<circle cx="766.1" cy="220.6" r="13.4"/>
<circle cx="798.2" cy="220.4" r="13.4"/>
<circle cx="830.3" cy="220.3" r="13.4"/>
<circle cx="862.4" cy="220.0" r="13.4"/>
<circle cx="894.5" cy="219.8" r="13.4"/>
<circle cx="926.6" cy="219.5" r="13.4"/>
<circle cx="958.7" cy="219.2" r="13.4"/>
<circle cx="188.4" cy="246.1" r="13.4"/>
<circle cx="220.4" cy="246.6" r="13.4"/>
<circle cx="252.5" cy="247.0" r="13.4"/>
<circle cx="284.6" cy="247.4" r="13.4"/>
<circle cx="316.7" cy="247.7" r="13.4"/>
<circle cx="348.8" cy="248.0" r="13.4"/>
<circle cx="380.9" cy="248.3" r="13.4"/>
<circle cx="413.0" cy="248.5" r="13.4"/>
<circle cx="445.1" cy="248.8" r="13.4"/>
<circle cx="477.2" cy="248.9" r="13.4"/>
<circle cx="509.3" cy="249.1" r="13.4"/>
<circle cx="541.4" cy="249.2" r="13.4"/>
<circle cx="573.5" cy="249.3" r="13.4"/>
<circle cx="605.6" cy="249.3" r="13.4"/>
<circle cx="637.7" cy="249.3" r="13.4"/>
<circle cx="669.8" cy="249.3" r="13.4"/>
<circle cx="702.0" cy="249.3" r="13.4"/>
<circle cx="734.1" cy="249.2" r="13.4"/>
<circle cx="766.2" cy="249.0" r="13.4"/>
<circle cx="798.3" cy="248.9" r="13.4"/>
<circle cx="830.5" cy="248.7" r="13.4"/>
<circle cx="862.6" cy="248.5" r="13.4"/>
<circle cx="894.7" cy="248.2" r="13.4"/>
<circle cx="926.9" cy="247.9" r="13.4"/>
<circle cx="959.0" cy="247.6" r="13.4"/>
<circle cx="1023.3" cy="246.8" r="13.4"/>
<circle cx="1055.5" cy="246.4" r="13.4"/>
<circle cx="155.9" cy="274.1" r="13.4"/>
<circle cx="188.0" cy="274.6" r="13.4"/>
<circle cx="220.1" cy="275.0" r="13.4"/>
<circle cx="252.2" cy="275.4" r="13.4"/>
<circle cx="284.3" cy="275.8" r="13.4"/>
<circle cx="316.4" cy="276.1" r="13.4"/>
<circle cx="348.5" cy="276.5" r="13.4"/>
<circle cx="380.6" cy="276.7" r="13.4"/>
<circle cx="412.8" cy="277.0" r="13.4"/>
<circle cx="444.9" cy="277.2" r="13.4"/>
<circle cx="477.0" cy="277.4" r="13.4"/>
<circle cx="509.2" cy="277.5" r="13.4"/>
<circle cx="541.3" cy="277.6" r="13.4"/>
<circle cx="573.4" cy="277.7" r="13.4"/>
<circle cx="605.6" cy="277.8" r="13.4"/>
<circle cx="637.7" cy="277.8" r="13.4"/>
<circle cx="669.9" cy="277.7" r="13.4"/>
<circle cx="702.0" cy="277.7" r="13.4"/>
<circle cx="734.2" cy="277.6" r="13.4"/>
<circle cx="766.3" cy="277.5" r="13.4"/>
<circle cx="798.5" cy="277.3" r="13.4"/>
<circle cx="830.6" cy="277.1" r="13.4"/>
<circle cx="862.8" cy="276.9" r="13.4"/>
<circle cx="895.0" cy="276.6" r="13.4"/>
<circle cx="927.2" cy="276.3" r="13.4"/>
<circle cx="959.3" cy="276.0" r="13.4"/>
<circle cx="991.5" cy="275.7" r="13.4"/>
<circle cx="1023.7" cy="275.3" r="13.4"/>
<circle cx="1055.9" cy="274.8" r="13.4"/>
<circle cx="59.0" cy="300.9" r="13.4"/>
<circle cx="91.2" cy="301.5" r="13.4"/>
<circle cx="123.3" cy="302.0" r="13.4"/>
<circle cx="155.4" cy="302.5" r="13.4"/>
<circle cx="187.6" cy="303.0" r="13.4"/>
<circle cx="219.7" cy="303.4" r="13.4"/>
<circle cx="251.8" cy="303.9" r="13.4"/>
<circle cx="348.3" cy="304.9" r="13.4"/>
<circle cx="412.6" cy="305.4" r="13.4"/>
<circle cx="444.7" cy="305.6" r="13.4"/>
<circle cx="509.0" cy="306.0" r="13.4"/>
<circle cx="541.2" cy="306.1" r="13.4"/>
<circle cx="573.4" cy="306.2" r="13.4"/>
<circle cx="605.6" cy="306.2" r="13.4"/>
<circle cx="637.7" cy="306.2" r="13.4"/>
<circle cx="669.9" cy="306.2" r="13.4"/>
<circle cx="702.1" cy="306.1" r="13.4"/>
<circle cx="734.3" cy="306.0" r="13.4"/>
<circle cx="766.5" cy="305.9" r="13.4"/>
<circle cx="798.6" cy="305.7" r="13.4"/>
<circle cx="830.8" cy="305.6" r="13.4"/>
<circle cx="863.0" cy="305.3" r="13.4"/>
<circle cx="895.2" cy="305.1" r="13.4"/>
<circle cx="927.4" cy="304.8" r="13.4"/>
<circle cx="959.6" cy="304.4" r="13.4"/>
<circle cx="991.8" cy="304.1" r="13.4"/>
<circle cx="1024.0" cy="303.7" r="13.4"/>
<circle cx="1056.3" cy="303.3" r="13.4"/>
<circle cx="1088.5" cy="302.8" r="13.4"/>
<circle cx="90.7" cy="329.9" r="13.4"/>
<circle cx="122.8" cy="330.5" r="13.4"/>
<circle cx="155.0" cy="331.0" r="13.4"/>
<circle cx="187.2" cy="331.4" r="13.4"/>
<circle cx="219.3" cy="331.9" r="13.4"/>
<circle cx="251.5" cy="332.3" r="13.4"/>
<circle cx="283.7" cy="332.7" r="13.4"/>
<circle cx="380.2" cy="333.6" r="13.4"/>
<circle cx="541.1" cy="334.5" r="13.4"/>
<circle cx="573.3" cy="334.6" r="13.4"/>
<circle cx="605.5" cy="334.6" r="13.4"/>
<circle cx="637.7" cy="334.6" r="13.4"/>
<circle cx="669.9" cy="334.6" r="13.4"/>
<circle cx="702.2" cy="334.6" r="13.4"/>
<circle cx="734.4" cy="334.5" r="13.4"/>
<circle cx="766.6" cy="334.3" r="13.4"/>
<circle cx="798.8" cy="334.2" r="13.4"/>
<circle cx="831.0" cy="334.0" r="13.4"/>
<circle cx="863.2" cy="333.8" r="13.4"/>
<circle cx="895.5" cy="333.5" r="13.4"/>
<circle cx="927.7" cy="333.2" r="13.4"/>
<circle cx="959.9" cy="332.9" r="13.4"/>
<circle cx="992.2" cy="332.5" r="13.4"/>
<circle cx="1024.4" cy="332.1" r="13.4"/>
<circle cx="1056.6" cy="331.7" r="13.4"/>
<circle cx="122.4" cy="358.9" r="13.4"/>
<circle cx="219.0" cy="360.3" r="13.4"/>
<circle cx="251.2" cy="360.8" r="13.4"/>
<circle cx="347.8" cy="361.8" r="13.4"/>
<circle cx="380.0" cy="362.1" r="13.4"/>
<circle cx="412.2" cy="362.3" r="13.4"/>
<circle cx="444.4" cy="362.5" r="13.4"/>
<circle cx="476.6" cy="362.7" r="13.4"/>
<circle cx="508.8" cy="362.8" r="13.4"/>
<circle cx="605.5" cy="363.1" r="13.4"/>
<circle cx="637.7" cy="363.1" r="13.4"/>
<circle cx="670.0" cy="363.1" r="13.4"/>
<circle cx="702.2" cy="363.0" r="13.4"/>
<circle cx="734.5" cy="362.9" r="13.4"/>
<circle cx="766.7" cy="362.8" r="13.4"/>
<circle cx="799.0" cy="362.6" r="13.4"/>
<circle cx="831.2" cy="362.4" r="13.4"/>
<circle cx="863.5" cy="362.2" r="13.4"/>
<circle cx="895.7" cy="361.9" r="13.4"/>
<circle cx="928.0" cy="361.6" r="13.4"/>
<circle cx="960.2" cy="361.3" r="13.4"/>
<circle cx="992.5" cy="360.9" r="13.4"/>
<circle cx="1024.8" cy="360.5" r="13.4"/>
<circle cx="315.3" cy="389.9" r="13.4"/>
<circle cx="347.5" cy="390.2" r="13.4"/>
<circle cx="379.8" cy="390.5" r="13.4"/>
<circle cx="412.0" cy="390.8" r="13.4"/>
<circle cx="444.2" cy="391.0" r="13.4"/>
<circle cx="508.7" cy="391.3" r="13.4"/>
<circle cx="541.0" cy="391.4" r="13.4"/>
<circle cx="573.2" cy="391.5" r="13.4"/>
<circle cx="605.5" cy="391.5" r="13.4"/>
<circle cx="637.8" cy="391.5" r="13.4"/>
<circle cx="702.3" cy="391.4" r="13.4"/>
<circle cx="734.6" cy="391.3" r="13.4"/>
<circle cx="766.8" cy="391.2" r="13.4"/>
<circle cx="799.1" cy="391.1" r="13.4"/>
<circle cx="831.4" cy="390.9" r="13.4"/>
<circle cx="863.7" cy="390.6" r="13.4"/>
<circle cx="896.0" cy="390.4" r="13.4"/>
<circle cx="928.2" cy="390.1" r="13.4"/>
<circle cx="960.5" cy="389.7" r="13.4"/>
<circle cx="992.8" cy="389.4" r="13.4"/>
<circle cx="1025.1" cy="389.0" r="13.4"/>
<circle cx="218.2" cy="417.2" r="13.4"/>
<circle cx="250.5" cy="417.7" r="13.4"/>
<circle cx="282.8" cy="418.0" r="13.4"/>
<circle cx="315.0" cy="418.4" r="13.4"/>
<circle cx="347.3" cy="418.7" r="13.4"/>
<circle cx="379.5" cy="419.0" r="13.4"/>
<circle cx="411.8" cy="419.2" r="13.4"/>
<circle cx="444.1" cy="419.4" r="13.4"/>
<circle cx="476.4" cy="419.6" r="13.4"/>
<circle cx="508.6" cy="419.7" r="13.4"/>
<circle cx="540.9" cy="419.8" r="13.4"/>
<circle cx="573.2" cy="419.9" r="13.4"/>
<circle cx="605.5" cy="420.0" r="13.4"/>
<circle cx="637.8" cy="420.0" r="13.4"/>
<circle cx="670.1" cy="419.9" r="13.4"/>
<circle cx="702.4" cy="419.9" r="13.4"/>
<circle cx="734.7" cy="419.8" r="13.4"/>
<circle cx="767.0" cy="419.7" r="13.4"/>
<circle cx="799.3" cy="419.5" r="13.4"/>
<circle cx="831.6" cy="419.3" r="13.4"/>
<circle cx="863.9" cy="419.1" r="13.4"/>
<circle cx="896.2" cy="418.8" r="13.4"/>
<circle cx="928.5" cy="418.5" r="13.4"/>
<circle cx="960.8" cy="418.2" r="13.4"/>
<circle cx="993.2" cy="417.8" r="13.4"/>
<circle cx="1025.5" cy="417.4" r="13.4"/>
<circle cx="185.6" cy="445.2" r="13.4"/>
<circle cx="217.9" cy="445.7" r="13.4"/>
<circle cx="250.2" cy="446.1" r="13.4"/>
<circle cx="282.5" cy="446.5" r="13.4"/>
<circle cx="314.7" cy="446.8" r="13.4"/>
<circle cx="347.0" cy="447.1" r="13.4"/>
<circle cx="379.3" cy="447.4" r="13.4"/>
<circle cx="411.6" cy="447.7" r="13.4"/>
<circle cx="443.9" cy="447.9" r="13.4"/>
<circle cx="476.2" cy="448.0" r="13.4"/>
<circle cx="508.5" cy="448.2" r="13.4"/>
<circle cx="540.9" cy="448.3" r="13.4"/>
<circle cx="573.2" cy="448.4" r="13.4"/>
<circle cx="605.5" cy="448.4" r="13.4"/>
<circle cx="637.8" cy="448.4" r="13.4"/>
<circle cx="670.1" cy="448.4" r="13.4"/>
<circle cx="702.5" cy="448.3" r="13.4"/>
<circle cx="734.8" cy="448.2" r="13.4"/>
<circle cx="767.1" cy="448.1" r="13.4"/>
<circle cx="799.4" cy="447.9" r="13.4"/>
<circle cx="831.8" cy="447.7" r="13.4"/>
<circle cx="864.1" cy="447.5" r="13.4"/>
<circle cx="896.5" cy="447.2" r="13.4"/>
<circle cx="928.8" cy="446.9" r="13.4"/>
<circle cx="961.2" cy="446.6" r="13.4"/>
<circle cx="993.5" cy="446.2" r="13.4"/>
<circle cx="1025.9" cy="445.8" r="13.4"/>
<circle cx="1058.2" cy="445.4" r="13.4"/>
<circle cx="217.5" cy="474.1" r="13.4"/>
<circle cx="249.8" cy="474.6" r="13.4"/>
<circle cx="282.2" cy="474.9" r="13.4"/>
<circle cx="314.5" cy="475.3" r="13.4"/>
<circle cx="346.8" cy="475.6" r="13.4"/>
<circle cx="379.1" cy="475.9" r="13.4"/>
<circle cx="411.5" cy="476.1" r="13.4"/>
<circle cx="476.1" cy="476.5" r="13.4"/>
<circle cx="508.5" cy="476.6" r="13.4"/>
<circle cx="540.8" cy="476.7" r="13.4"/>
<circle cx="573.1" cy="476.8" r="13.4"/>
<circle cx="605.5" cy="476.8" r="13.4"/>
<circle cx="637.8" cy="476.8" r="13.4"/>
<circle cx="670.2" cy="476.8" r="13.4"/>
<circle cx="702.5" cy="476.8" r="13.4"/>
<circle cx="734.9" cy="476.7" r="13.4"/>
<circle cx="767.2" cy="476.5" r="13.4"/>
<circle cx="799.6" cy="476.4" r="13.4"/>
<circle cx="832.0" cy="476.2" r="13.4"/>
<circle cx="864.3" cy="475.9" r="13.4"/>
<circle cx="896.7" cy="475.7" r="13.4"/>
<circle cx="929.1" cy="475.4" r="13.4"/>
<circle cx="961.5" cy="475.0" r="13.4"/>
<circle cx="993.9" cy="474.7" r="13.4"/>
<circle cx="1026.2" cy="474.3" r="13.4"/>
<circle cx="1058.6" cy="473.8" r="13.4"/>
<circle cx="184.8" cy="502.1" r="13.4"/>
<circle cx="217.2" cy="502.6" r="13.4"/>
<circle cx="249.5" cy="503.0" r="13.4"/>
<circle cx="281.9" cy="503.4" r="13.4"/>
<circle cx="314.2" cy="503.7" r="13.4"/>
<circle cx="346.6" cy="504.0" r="13.4"/>
<circle cx="378.9" cy="504.3" r="13.4"/>
<circle cx="411.3" cy="504.5" r="13.4"/>
<circle cx="476.0" cy="504.9" r="13.4"/>
<circle cx="508.4" cy="505.1" r="13.4"/>
<circle cx="540.7" cy="505.2" r="13.4"/>
<circle cx="605.5" cy="505.3" r="13.4"/>
<circle cx="637.9" cy="505.3" r="13.4"/>
<circle cx="670.2" cy="505.3" r="13.4"/>
<circle cx="702.6" cy="505.2" r="13.4"/>
<circle cx="735.0" cy="505.1" r="13.4"/>
<circle cx="767.4" cy="505.0" r="13.4"/>
<circle cx="799.8" cy="504.8" r="13.4"/>
<circle cx="832.2" cy="504.6" r="13.4"/>
<circle cx="864.6" cy="504.4" r="13.4"/>
<circle cx="897.0" cy="504.1" r="13.4"/>
<circle cx="929.4" cy="503.8" r="13.4"/>
<circle cx="961.8" cy="503.5" r="13.4"/>
<circle cx="994.2" cy="503.1" r="13.4"/>
<circle cx="1026.6" cy="502.7" r="13.4"/>
<circle cx="1059.0" cy="502.3" r="13.4"/>
<circle cx="184.5" cy="530.6" r="13.4"/>
<circle cx="249.2" cy="531.5" r="13.4"/>
<circle cx="314.0" cy="532.2" r="13.4"/>
<circle cx="346.3" cy="532.5" r="13.4"/>
<circle cx="378.7" cy="532.7" r="13.4"/>
<circle cx="411.1" cy="533.0" r="13.4"/>
<circle cx="443.5" cy="533.2" r="13.4"/>
<circle cx="475.9" cy="533.4" r="13.4"/>
<circle cx="508.3" cy="533.5" r="13.4"/>
<circle cx="540.7" cy="533.6" r="13.4"/>
<circle cx="573.1" cy="533.7" r="13.4"/>
<circle cx="605.5" cy="533.7" r="13.4"/>
<circle cx="637.9" cy="533.7" r="13.4"/>
<circle cx="670.3" cy="533.7" r="13.4"/>
<circle cx="702.7" cy="533.6" r="13.4"/>
<circle cx="735.1" cy="533.5" r="13.4"/>
<circle cx="767.5" cy="533.4" r="13.4"/>
<circle cx="800.0" cy="533.2" r="13.4"/>
<circle cx="832.4" cy="533.0" r="13.4"/>
<circle cx="864.8" cy="532.8" r="13.4"/>
<circle cx="897.2" cy="532.5" r="13.4"/>
<circle cx="929.7" cy="532.2" r="13.4"/>
<circle cx="962.1" cy="531.9" r="13.4"/>
<circle cx="994.5" cy="531.5" r="13.4"/>
<circle cx="1027.0" cy="531.1" r="13.4"/>
<circle cx="1059.4" cy="530.7" r="13.4"/>
<circle cx="184.1" cy="559.1" r="13.4"/>
<circle cx="378.5" cy="561.2" r="13.4"/>
<circle cx="410.9" cy="561.4" r="13.4"/>
<circle cx="605.5" cy="562.2" r="13.4"/>
<circle cx="637.9" cy="562.2" r="13.4"/>
<circle cx="670.4" cy="562.1" r="13.4"/>
<circle cx="702.8" cy="562.1" r="13.4"/>
<circle cx="735.2" cy="562.0" r="13.4"/>
<circle cx="767.7" cy="561.8" r="13.4"/>
<circle cx="800.1" cy="561.7" r="13.4"/>
<circle cx="832.6" cy="561.5" r="13.4"/>
<circle cx="865.0" cy="561.2" r="13.4"/>
<circle cx="897.5" cy="561.0" r="13.4"/>
<circle cx="930.0" cy="560.7" r="13.4"/>
<circle cx="962.4" cy="560.3" r="13.4"/>
<circle cx="994.9" cy="560.0" r="13.4"/>
<circle cx="1027.4" cy="559.6" r="13.4"/>
<circle cx="1059.8" cy="559.1" r="13.4"/>
<circle cx="183.7" cy="587.5" r="13.4"/>
<circle cx="605.5" cy="590.6" r="13.4"/>
<circle cx="638.0" cy="590.6" r="13.4"/>
<circle cx="670.4" cy="590.6" r="13.4"/>
<circle cx="702.9" cy="590.5" r="13.4"/>
<circle cx="735.4" cy="590.4" r="13.4"/>
<circle cx="767.8" cy="590.3" r="13.4"/>
<circle cx="800.3" cy="590.1" r="13.4"/>
<circle cx="832.8" cy="589.9" r="13.4"/>
<circle cx="865.3" cy="589.7" r="13.4"/>
<circle cx="897.8" cy="589.4" r="13.4"/>
<circle cx="930.3" cy="589.1" r="13.4"/>
<circle cx="962.8" cy="588.8" r="13.4"/>
<circle cx="995.3" cy="588.4" r="13.4"/>
<circle cx="1027.8" cy="588.0" r="13.4"/>
<circle cx="638.0" cy="619.0" r="13.4"/>
<circle cx="670.5" cy="619.0" r="13.4"/>
<circle cx="703.0" cy="618.9" r="13.4"/>
<circle cx="735.5" cy="618.8" r="13.4"/>
<circle cx="768.0" cy="618.7" r="13.4"/>
<circle cx="800.5" cy="618.5" r="13.4"/>
<circle cx="833.0" cy="618.3" r="13.4"/>
<circle cx="865.5" cy="618.1" r="13.4"/>
<circle cx="898.0" cy="617.8" r="13.4"/>
<circle cx="930.6" cy="617.5" r="13.4"/>
<circle cx="963.1" cy="617.2" r="13.4"/>
<circle cx="995.6" cy="616.8" r="13.4"/>
<circle cx="638.0" cy="647.5" r="13.4"/>
<circle cx="670.6" cy="647.5" r="13.4"/>
<circle cx="703.1" cy="647.4" r="13.4"/>
<circle cx="735.6" cy="647.3" r="13.4"/>
<circle cx="768.1" cy="647.2" r="13.4"/>
<circle cx="800.7" cy="647.0" r="13.4"/>
<circle cx="833.2" cy="646.8" r="13.4"/>
<circle cx="865.8" cy="646.5" r="13.4"/>
<circle cx="898.3" cy="646.3" r="13.4"/>
<circle cx="930.9" cy="646.0" r="13.4"/>
<circle cx="963.4" cy="645.6" r="13.4"/>
<circle cx="996.0" cy="645.3" r="13.4"/>
<circle cx="638.1" cy="675.9" r="13.4"/>
<circle cx="670.6" cy="675.9" r="13.4"/>
<circle cx="703.2" cy="675.8" r="13.4"/>
<circle cx="735.7" cy="675.7" r="13.4"/>
<circle cx="768.3" cy="675.6" r="13.4"/>
<circle cx="800.9" cy="675.4" r="13.4"/>
<circle cx="833.4" cy="675.2" r="13.4"/>
<circle cx="866.0" cy="675.0" r="13.4"/>
<circle cx="898.6" cy="674.7" r="13.4"/>
<circle cx="931.2" cy="674.4" r="13.4"/>
<circle cx="963.7" cy="674.1" r="13.4"/>
<circle cx="996.3" cy="673.7" r="13.4"/>
<circle cx="638.1" cy="704.4" r="13.4"/>
<circle cx="670.7" cy="704.3" r="13.4"/>
<circle cx="703.3" cy="704.3" r="13.4"/>
<circle cx="735.9" cy="704.2" r="13.4"/>
<circle cx="768.5" cy="704.0" r="13.4"/>
<circle cx="801.1" cy="703.9" r="13.4"/>
<circle cx="833.7" cy="703.7" r="13.4"/>
<circle cx="866.3" cy="703.4" r="13.4"/>
<circle cx="898.9" cy="703.2" r="13.4"/>
<circle cx="931.5" cy="702.8" r="13.4"/>
<circle cx="964.1" cy="702.5" r="13.4"/>
<circle cx="996.7" cy="702.1" r="13.4"/>
<circle cx="1029.3" cy="701.7" r="13.4"/>
<circle cx="638.2" cy="732.8" r="13.4"/>
<circle cx="670.8" cy="732.8" r="13.4"/>
<circle cx="703.4" cy="732.7" r="13.4"/>
<circle cx="736.0" cy="732.6" r="13.4"/>
<circle cx="768.6" cy="732.5" r="13.4"/>
<circle cx="801.3" cy="732.3" r="13.4"/>
<circle cx="833.9" cy="732.1" r="13.4"/>
<circle cx="866.5" cy="731.9" r="13.4"/>
<circle cx="899.2" cy="731.6" r="13.4"/>
<circle cx="997.1" cy="730.6" r="13.4"/>
<circle cx="1029.7" cy="730.2" r="13.4"/>
<circle cx="703.5" cy="761.2" r="13.4"/>
<circle cx="736.2" cy="761.1" r="13.4"/>
<circle cx="834.1" cy="760.5" r="13.4"/>
</g>
<!-- header -->
<rect x="-1" y="16.2" width="114" height="21.3" fill="#f08a3c" stroke="#f07a0a" stroke-width="1.1"/>
<text x="41" y="32.8" font-size="17" font-weight="bold" fill="#fff" stroke="#fff" stroke-width="0.5" textLength="56.5" lengthAdjust="spacingAndGlyphs">3.6.1.8</text>
<rect x="196.5" y="16" width="944" height="22" fill="#163b38" stroke="#000" stroke-width="1.1"/>
<text x="1032" y="32" font-size="17.3" font-weight="bold" fill="#fff" stroke="#fff" stroke-width="0.3" textLength="85" lengthAdjust="spacingAndGlyphs">Glatthafer</text>
<!-- logo -->
<g>
<path fill="#f28a3a" fill-rule="evenodd" d="M128.4 17.7 Q128.4 6.7 140.35 6.7 Q152.3 6.7 152.3 17.7 L152.3 21 L143.7 21 L143.7 16.4 Q143.7 13.4 140.7 13.4 Q137.7 13.4 137.7 16.4 L137.7 21.6 L143.7 21.6 L143.7 34.3 L152.3 34.3 L152.3 42.7 Q152.3 53.7 140.35 53.7 Q128.4 53.7 128.4 42.7 Z M137.4 35 L137.4 44.7 Q137.4 47.7 140.55 47.7 Q143.7 47.7 143.7 44.7 L143.7 35 Z"/>
<clipPath id="sc"><path fill-rule="evenodd" clip-rule="evenodd" d="M128.4 17.7 Q128.4 6.7 140.35 6.7 Q152.3 6.7 152.3 17.7 L152.3 21 L143.7 21 L143.7 16.4 Q143.7 13.4 140.7 13.4 Q137.7 13.4 137.7 16.4 L137.7 21.6 L143.7 21.6 L143.7 34.3 L152.3 34.3 L152.3 42.7 Q152.3 53.7 140.35 53.7 Q128.4 53.7 128.4 42.7 Z M137.4 35 L137.4 44.7 Q137.4 47.7 140.55 47.7 Q143.7 47.7 143.7 44.7 L143.7 35 Z"/></clipPath>
<path clip-path="url(#sc)" d="M128.4 16 L131 17.2 L150 43.6 L152.3 47 L152.3 53 L144 53 L128.4 28 Z" fill="#f6a872" opacity="0.85"/>
<line x1="131" y1="17.2" x2="150" y2="43.6" stroke="#6b4a33" stroke-width="0.5"/>
<circle cx="141.8" cy="25.6" r="0.9" fill="#1b2a28"/>
<text x="144.8" y="26.8" font-size="8.6" font-weight="bold" fill="#22302d" textLength="35.8" lengthAdjust="spacingAndGlyphs">schulatlas</text>
<text x="121" y="37.7" font-size="16.5" font-weight="bold" fill="#13221f" textLength="66.7" lengthAdjust="spacingAndGlyphs">steiermark</text>
</g>
<!-- footer -->
<rect x="0" y="786.7" width="1140" height="20" fill="#c4cac8"/>
<text x="78.7" y="800.5" font-size="13.7" font-weight="bold" fill="#10302a" stroke="#10302a" stroke-width="0.3" textLength="258.2" lengthAdjust="spacingAndGlyphs">Naturraum und Physische Geographie</text>
<text x="996.8" y="800.4" font-size="13" font-weight="bold" fill="#10302a" stroke="#10302a" stroke-width="0.3" textLength="127.7" lengthAdjust="spacingAndGlyphs">www.schulatlas.at</text>
<rect x="23.9" y="769" width="36.8" height="37" fill="#fdbb1c"/>
<g fill="#fff">
<path d="M33.3 771.4 L36 777 L35.2 777.5 L37.5 782 L36.6 782.5 L39.5 788 L38.6 788.5 L40.7 794.8 L25.3 794.8 L27.4 788.5 L26.5 788 L29.4 782.5 L28.5 782 L30.8 777.5 L30 777 Z"/>
<rect x="31.6" y="794.5" width="3.7" height="10"/>
<circle cx="45.5" cy="789" r="4.3"/><circle cx="50.2" cy="784.5" r="4.5"/><circle cx="55" cy="789" r="4.2"/><circle cx="50" cy="790.5" r="4.5"/>
<rect x="48.1" y="793.5" width="4" height="11"/>
<circle cx="54.1" cy="775" r="2"/>
</g>
<path d="M37.8 780 L43.3 773.4 L48.1 780.5" fill="none" stroke="#fff" stroke-width="1"/>
<g stroke="#fff" stroke-width="0.8">
<line x1="54.1" y1="770.6" x2="54.1" y2="771.8"/><line x1="54.1" y1="778.2" x2="54.1" y2="779.4"/>
<line x1="49.7" y1="775" x2="50.9" y2="775"/><line x1="57.3" y1="775" x2="58.5" y2="775"/>
<line x1="51" y1="771.9" x2="51.8" y2="772.7"/><line x1="56.4" y1="777.3" x2="57.2" y2="778.1"/>
<line x1="57.2" y1="771.9" x2="56.4" y2="772.7"/><line x1="51.8" y1="777.3" x2="51" y2="778.1"/>
</g>
<!-- legend -->
<line x1="26.75" y1="672.2" x2="50.9" y2="672.2" stroke="#f07d22" stroke-width="1.6"/>
<line x1="26.75" y1="695.3" x2="50.9" y2="695.3" stroke="#f6a878" stroke-width="1"/>
<text x="62.7" y="677.1" font-size="13.4" fill="#333" textLength="78.3" lengthAdjust="spacingAndGlyphs">Landesgrenze</text>
<text x="62.7" y="699.8" font-size="13.4" fill="#333" textLength="78.6" lengthAdjust="spacingAndGlyphs">Bezirksgrenze</text>
<text x="260.9" y="639.4" font-size="15" fill="#1e1e1e" stroke="#1e1e1e" stroke-width="0.35" textLength="70.1" lengthAdjust="spacingAndGlyphs">Glatthafer</text>
<text x="260.9" y="661" font-size="10.8" font-style="italic" fill="#555" textLength="179.6" lengthAdjust="spacingAndGlyphs">Datengrundlage: Floristische Kartierung,</text>
<text x="260.9" y="673" font-size="10.8" font-style="italic" fill="#555" textLength="128" lengthAdjust="spacingAndGlyphs">Universalmuseum Joanneum</text>
<circle cx="271.6" cy="695.6" r="9.7" fill="#a5d862" stroke="#4a4a4a" stroke-width="1"/>
<text x="289.6" y="700.4" font-size="13.7" fill="#333" textLength="191.6" lengthAdjust="spacingAndGlyphs">Glatthafer (<tspan font-style="italic">Arrhenatherum elatius</tspan>)</text>
<!-- scale bar -->
<path d="M898.2 767.4 V770.8 H1052.6 V767.4 M949.6 767.4 V770.8 M1000.9 767.4 V770.8" fill="none" stroke="#555" stroke-width="1"/>
<g font-size="9.5" fill="#444">
<text x="898" y="761.7" text-anchor="middle">0</text>
<text x="950" y="761.7" text-anchor="middle">10</text>
<text x="1001" y="761.7" text-anchor="middle">20</text>
<text x="1047.6" y="761.7" textLength="51.8" lengthAdjust="spacingAndGlyphs">30 Kilometer</text>
</g>
<!-- north arrow -->
<path d="M1116.4 747.6 L1110.9 761.8 L1122.3 761.8 Z" fill="none" stroke="#111" stroke-width="1" stroke-linejoin="miter"/>
<path d="M1116.4 747.6 L1122.3 761.8 L1113.2 761.8 Q1116.6 757.5 1116.4 747.6 Z" fill="#111"/>
<path d="M1113.3 771 V763.6 L1119.7 771 V763.6" fill="none" stroke="#111" stroke-width="1.25"/>
</svg>
</body></html>
